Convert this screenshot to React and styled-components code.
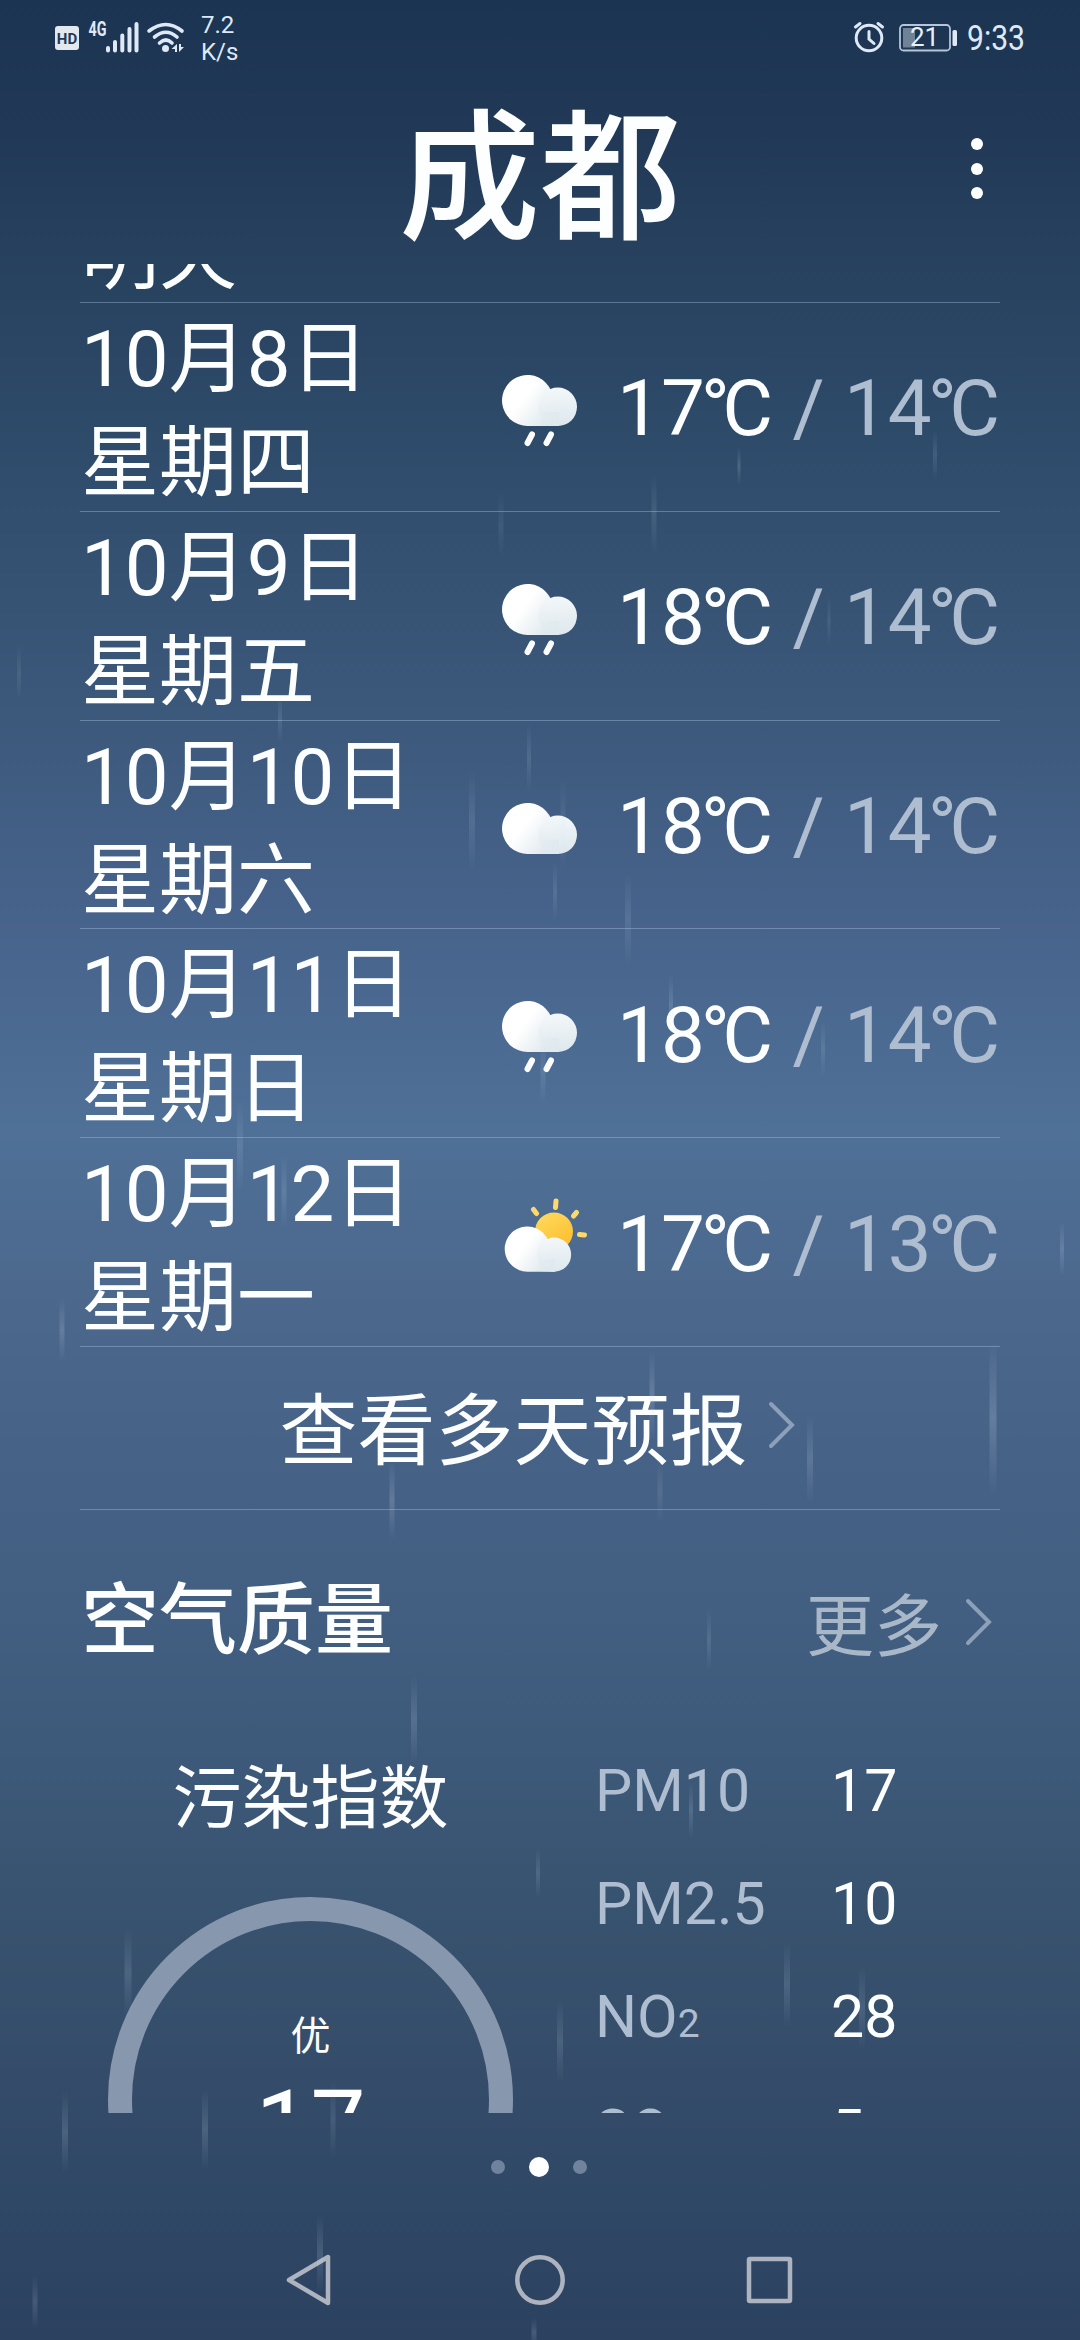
import React from 'react';
import styled, { createGlobalStyle } from 'styled-components';

const GlobalStyle = createGlobalStyle`
    * { box-sizing: border-box; }
    body {
        margin: 0;
        background: #2c4160;
    }
`
const Screen = styled.div`
    position: relative;
    display: flex;
    flex-direction: column;
    width: 1080px;
    height: 2340px;
    overflow: hidden;
    color: #fcfeff;
    font-family: Roboto, 'Noto Sans CJK SC', sans-serif;
    background: linear-gradient(
        #1b3452 0px,
        #213957 130px,
        #284360 290px,
        #304d6d 480px,
        #3a5779 680px,
        #46628a 900px,
        #4f7097 1130px,
        #4c688d 1290px,
        #466287 1450px,
        #425e80 1610px,
        #3e5a7b 1740px,
        #38536f 1900px,
        #344c69 2080px,
        #2f4866 2200px,
        #2c4160 2340px
    );
`
const Rain = styled.svg`
    position: absolute;
    inset: 0;
`
const StatusBar = styled.header`
    display: flex;
    justify-content: space-between;
    height: 76px;
    padding: 0 57px 0 55px;
    color: #dfe9f6;
`
const StatusGroup = styled.div`
    display: flex;
    align-items: flex-start;
`
const StatusIcon = styled.svg`
    display: block;
    margin-left: ${(props) => props.$gap || 0}px;
`
const NetSpeed = styled.div`
    margin: 12px 0 0 16px;
    font-size: 24px;
    line-height: 27px;
`
const Clock = styled.div`
    width: 56px;
    margin: 18px 0 0 9px;
    font-size: 35px;
    line-height: 42px;
    transform: scaleX(0.86);
    transform-origin: left;
    white-space: nowrap;
`
const TitleBar = styled.div`
    display: grid;
    grid-template-columns: 1fr auto 1fr;
    height: 188px;
`
const City = styled.h1`
    grid-column: 2;
    margin: 0;
    font-size: 141px;
    font-weight: 500;
    line-height: 208px;
`
const MenuButton = styled.div`
    display: flex;
    flex-direction: column;
    gap: 12.5px;
    justify-self: end;
    margin: 62px 97px 0 0;
`
const MenuDot = styled.span`
    width: 12px;
    height: 12px;
    border-radius: 50%;
    background: #fff;
`
const Scroll = styled.main`
    display: flex;
    flex-direction: column;
    height: 1849px;
    padding: 0 80px;
    overflow: hidden;
`
const Divided = styled.div`
    flex: none;
    border-bottom: 1px solid rgba(170, 198, 230, 0.4);
`
const CutRow = styled(Divided)`
    display: flex;
    align-items: flex-end;
    height: 39px;
    padding-left: 1px;
    font-size: 78px;
    line-height: 90px;
    overflow: hidden;
`
const DayRow = styled(Divided)`
    display: flex;
    align-items: center;
    height: 208.8px;
`
const DayName = styled.div`
    width: 415px;
    padding: 10px 0 0 1px;
    font-size: 78px;
    line-height: 104px;
    white-space: nowrap;
`
const Temps = styled.div`
    display: flex;
    flex: 1;
    justify-content: flex-end;
    padding-top: 5px;
    font-size: 78px;
    line-height: 100px;
    white-space: pre;
`
const Low = styled.span`
    color: #afbdd0;
`
const DegreeSign = styled.span`
    margin-left: -4px;
    letter-spacing: -7.6px;
`
const MoreDays = styled(Divided)`
    display: flex;
    align-items: center;
    justify-content: center;
    height: 163px;
    padding: 0 5px 5px 0;
    font-size: 78px;
    gap: 20px;
`
const SectionHead = styled.div`
    display: flex;
    flex: none;
    justify-content: space-between;
    align-items: center;
    height: 219px;
    padding-bottom: 3px;
`
const SectionTitle = styled.h2`
    margin: 0 0 7px 1px;
    font-size: 78px;
    font-weight: 500;
`
const MoreLink = styled.div`
    display: flex;
    align-items: center;
    gap: 23px;
    margin: 8px 7px 0 0;
    color: #a9b8c9;
    font-size: 68px;
`
const AirQuality = styled.section`
    display: grid;
    flex: none;
    grid-template-columns: 461px 1fr;
`
const IndexColumn = styled.div`
    display: flex;
    flex-direction: column;
    align-items: center;
`
const IndexTitle = styled.div`
    height: 168px;
    padding-top: 21px;
    font-size: 69px;
    line-height: 100px;
`
const Ring = styled.div`
    display: flex;
    flex-direction: column;
    align-items: center;
    width: 405px;
    height: 405px;
    padding-top: 86px;
    border: 24px solid #8797ad;
    border-radius: 50%;
`
const Grade = styled.div`
    font-size: 40px;
    line-height: 60px;
`
const IndexValue = styled.div`
    font-size: 98px;
    line-height: 120px;
`
const Pollutants = styled.div`
    padding: 6px 0 0 54px;
`
const Pollutant = styled.div`
    display: grid;
    grid-template-columns: 236px 1fr;
    align-items: baseline;
    height: 113.2px;
    padding-top: 21px;
    font-size: 59px;
    line-height: 70px;
`
const PollutantName = styled.span`
    color: #afbdd0;
`
const Small = styled.small`
    font-size: 39px;
    line-height: 0;
`
const Pager = styled.div`
    display: flex;
    align-items: center;
    justify-content: center;
    gap: 24px;
    height: 108px;
    margin-right: 3px;
`
const PagerDot = styled.span`
    width: ${(props) => (props.$active ? 20 : 14)}px;
    height: ${(props) => (props.$active ? 20 : 14)}px;
    border-radius: 50%;
    background: ${(props) => (props.$active ? '#fff' : '#70839d')};
`
const NavBar = styled.nav`
    display: flex;
    align-items: center;
    justify-content: center;
    gap: 179px;
    height: 118px;
`

// x, top, length, width, opacity
const drops = [
    [19, 646, 54, 4, 0.1], [501, 492, 66, 5, 0.08], [654, 474, 80, 5, 0.12], [739, 447, 38, 3, 0.18],
    [935, 430, 50, 4, 0.12], [829, 596, 50, 3, 0.1], [280, 693, 50, 4, 0.12], [472, 770, 102, 6, 0.12],
    [529, 724, 68, 4, 0.12], [563, 780, 90, 5, 0.1], [555, 862, 60, 4, 0.12], [628, 872, 94, 6, 0.12],
    [671, 975, 60, 4, 0.16], [240, 1100, 92, 6, 0.12], [284, 1155, 72, 5, 0.14], [543, 1040, 64, 5, 0.13],
    [823, 1020, 58, 4, 0.12], [62, 1298, 64, 5, 0.18], [652, 1350, 90, 5, 0.2], [993, 1340, 156, 7, 0.2],
    [810, 1415, 88, 6, 0.16], [392, 1460, 80, 5, 0.2], [660, 1460, 62, 5, 0.1], [1062, 1222, 54, 4, 0.18],
    [709, 1608, 64, 4, 0.13], [414, 1676, 88, 6, 0.16], [691, 1782, 56, 4, 0.16], [538, 1848, 50, 4, 0.14],
    [128, 1928, 90, 7, 0.14], [787, 1942, 86, 6, 0.14], [560, 2000, 84, 6, 0.14], [862, 1966, 84, 6, 0.13],
    [65, 2092, 80, 6, 0.16], [205, 2088, 82, 6, 0.16], [333, 2080, 78, 5, 0.12], [320, 2215, 78, 6, 0.16],
    [35, 2275, 54, 5, 0.14], [534, 2318, 30, 5, 0.16]
]

const days = [
    { date: '10月8日', week: '星期四', sky: 'rain', high: 17, low: 14 },
    { date: '10月9日', week: '星期五', sky: 'rain', high: 18, low: 14 },
    { date: '10月10日', week: '星期六', sky: 'cloud', high: 18, low: 14 },
    { date: '10月11日', week: '星期日', sky: 'rain', high: 18, low: 14 },
    { date: '10月12日', week: '星期一', sky: 'sun', high: 17, low: 13 }
]

const pollutants = [
    { name: 'PM10', value: 17 },
    { name: 'PM2.5', value: 10 },
    { name: 'NO', sub: '2', value: 28 },
    { name: 'SO', sub: '2', value: 5 }
]

const CloudShape = () => (
    <>
        <path d="M32.5 69 A25.5 25.5 0 1 1 56 33.500 L62.800 50 V69 Z" fill="url(#cloudBack)" />
        <circle cx="62.800" cy="49.800" r="19.200" fill="url(#cloudFront)" />
        <path d="M44 55 H64 V69 H44 Z" fill="url(#cloudJoin)" />
    </>
)

const WeatherIcon = ({ sky }) => (
    <svg width="100" height="100" viewBox="0 0 100 100">
        {sky === 'rain' && (
            <g>
                <CloudShape />
                <path d="M37 77.500 l-4.500 8.500 M56 77.500 l-4.500 8.500" stroke="#fbfdff" strokeWidth="6" strokeLinecap="round" />
            </g>
        )}
        {sky === 'cloud' && <g transform="translate(0 11)"><CloudShape /></g>}
        {sky === 'sun' && (
            <g>
                <path
                    d="M61 9 L60.500 15.500 M38.500 17.500 L41.500 21.500 M81.500 20.500 L78.500 24 M84.500 42.500 L89.500 43"
                    stroke="#fdd96a"
                    strokeWidth="5"
                    strokeLinecap="round"
                />
                <circle cx="59" cy="39.500" r="19" fill="url(#sunFill)" />
                <g transform="translate(3.500 18.500) scale(0.886)"><CloudShape /></g>
            </g>
        )}
    </svg>
)

const Chevron = () => (
    <svg width="28" height="48" viewBox="0 0 28 48" fill="none">
        <path d="M3 3 L24 24 L3 45" stroke="#8da0b9" strokeWidth="4" strokeLinecap="round" />
    </svg>
)

const Degrees = ({ value }) => (
    <span>{value}<DegreeSign>°</DegreeSign>C</span>
)

const App = () => {
    return (
        <Screen>
            <GlobalStyle />
            <Rain width="1080" height="2340">
                <defs>
                    <linearGradient id="drop" x1="0" y1="0" x2="0" y2="1">
                        <stop offset="0" stopColor="#cfe2f8" stopOpacity="0" />
                        <stop offset="0.5" stopColor="#cfe2f8" />
                        <stop offset="1" stopColor="#cfe2f8" stopOpacity="0" />
                    </linearGradient>
                    <linearGradient id="cloudBack" gradientUnits="userSpaceOnUse" x1="20" y1="30" x2="56" y2="58">
                        <stop offset="0.3" stopColor="#ffffff" />
                        <stop offset="1" stopColor="#e2eaee" />
                    </linearGradient>
                    <linearGradient id="cloudFront" gradientUnits="userSpaceOnUse" x1="60" y1="31" x2="64" y2="69">
                        <stop offset="0" stopColor="#f3f7f9" />
                        <stop offset="1" stopColor="#dde8ee" />
                    </linearGradient>
                    <linearGradient id="cloudJoin" gradientUnits="userSpaceOnUse" x1="44" y1="0" x2="62" y2="0">
                        <stop offset="0" stopColor="#e0e9ee" stopOpacity="0" />
                        <stop offset="1" stopColor="#e0e9ee" />
                    </linearGradient>
                    <linearGradient id="sunFill" x1="0.2" y1="0" x2="0.8" y2="1">
                        <stop offset="0" stopColor="#ffd95c" />
                        <stop offset="1" stopColor="#fcbc2c" />
                    </linearGradient>
                </defs>
                {drops.map(([x, y, length, width, opacity], index) => (
                    <rect key={index} x={x - width / 2} y={y} width={width} height={length} rx={width / 2} fill="url(#drop)" opacity={opacity} />
                ))}
            </Rain>
            <StatusBar>
                <StatusGroup>
                    <StatusIcon width="130" height="60" viewBox="55 0 130 60">
                        <rect x="55" y="26" width="24" height="24" rx="3" fill="#e3e8ee" />
                        <text x="67" y="43.500" textAnchor="middle" fontSize="15" fontWeight="700" fill="#203955">HD</text>
                        <text x="88.500" y="36" fontSize="19.500" fontWeight="700" fill="#dfe9f6" textLength="18" lengthAdjust="spacingAndGlyphs">4G</text>
                        <path d="M108 50.500V48 M115 50.500V42 M122.300 50.500V35.500 M129.500 50.500V29 M136.500 50.500V24" stroke="#dfe9f6" strokeWidth="4" strokeLinecap="round" />
                        <g fill="none" stroke="#dfe9f6" strokeWidth="3.600" strokeLinecap="round">
                            <path d="M149 31 Q166 18 182 31" />
                            <path d="M154.500 37 Q166 27.500 177 37" />
                            <path d="M159.500 43 Q166 37 172 43" />
                        </g>
                        <circle cx="165.500" cy="48.500" r="3.500" fill="#dfe9f6" />
                        <path d="M171.500 49 L177 44 V52 H175 V49Z M179 44 V52 L184 47 H181 V44Z" fill="#dfe9f6" />
                    </StatusIcon>
                    <NetSpeed>7.2<br />K/s</NetSpeed>
                </StatusGroup>
                <StatusGroup>
                    <StatusIcon width="32" height="60" viewBox="852 0 32 60" fill="none" stroke="#dfe9f6" strokeLinecap="round">
                        <circle cx="868" cy="38" r="12.800" strokeWidth="3" />
                        <path d="M868 31.500 V39 L873 43.500" strokeWidth="3" />
                        <path d="M854.500 27 L859 23.500 M881.500 27 L877 23.500" strokeWidth="3" />
                    </StatusIcon>
                    <StatusIcon $gap="13" width="60" height="60" viewBox="897 0 60 60">
                        <rect x="899" y="25" width="50" height="25.500" rx="3.500" fill="none" stroke="#b6c5d8" strokeWidth="1.800" />
                        <rect x="902" y="28" width="12" height="19.500" fill="#6f8296" />
                        <rect x="951.500" y="30" width="4.500" height="16" rx="1.500" fill="#dfe9f6" />
                        <text x="923.500" y="46" textAnchor="middle" fontSize="26" fill="#e8f0fa">21</text>
                    </StatusIcon>
                    <Clock>9:33</Clock>
                </StatusGroup>
            </StatusBar>
            <TitleBar>
                <City>成都</City>
                <MenuButton>
                    <MenuDot />
                    <MenuDot />
                    <MenuDot />
                </MenuButton>
            </TitleBar>
            <Scroll>
                <CutRow>明天</CutRow>
                {days.map((day) => (
                    <DayRow key={day.date}>
                        <DayName>{day.date}<br />{day.week}</DayName>
                        <WeatherIcon sky={day.sky} />
                        <Temps>
                            <Degrees value={day.high} />
                            <Low> / <Degrees value={day.low} /></Low>
                        </Temps>
                    </DayRow>
                ))}
                <MoreDays>
                    查看多天预报
                    <Chevron />
                </MoreDays>
                <SectionHead>
                    <SectionTitle>空气质量</SectionTitle>
                    <MoreLink>更多<Chevron /></MoreLink>
                </SectionHead>
                <AirQuality>
                    <IndexColumn>
                        <IndexTitle>污染指数</IndexTitle>
                        <Ring>
                            <Grade>优</Grade>
                            <IndexValue>17</IndexValue>
                        </Ring>
                    </IndexColumn>
                    <Pollutants>
                        {pollutants.map((item) => (
                            <Pollutant key={item.name}>
                                <PollutantName>{item.name}{item.sub && <Small>{item.sub}</Small>}</PollutantName>
                                <span>{item.value}</span>
                            </Pollutant>
                        ))}
                    </Pollutants>
                </AirQuality>
            </Scroll>
            <Pager>
                <PagerDot />
                <PagerDot $active />
                <PagerDot />
            </Pager>
            <NavBar>
                <svg width="50" height="56" viewBox="0 0 50 56" fill="none">
                    <path d="M4 28 L43 5 V51 Z" stroke="#aeb4bf" strokeWidth="4.500" strokeLinejoin="round" />
                </svg>
                <svg width="52" height="56" viewBox="0 0 52 56" fill="none">
                    <circle cx="26" cy="28" r="22.700" stroke="#aeb4bf" strokeWidth="4.500" />
                </svg>
                <svg width="50" height="56" viewBox="0 0 50 56" fill="none">
                    <rect x="4" y="7" width="41" height="42" rx="1" stroke="#aeb4bf" strokeWidth="4.500" />
                </svg>
            </NavBar>
        </Screen>
    )
}

export default App;
